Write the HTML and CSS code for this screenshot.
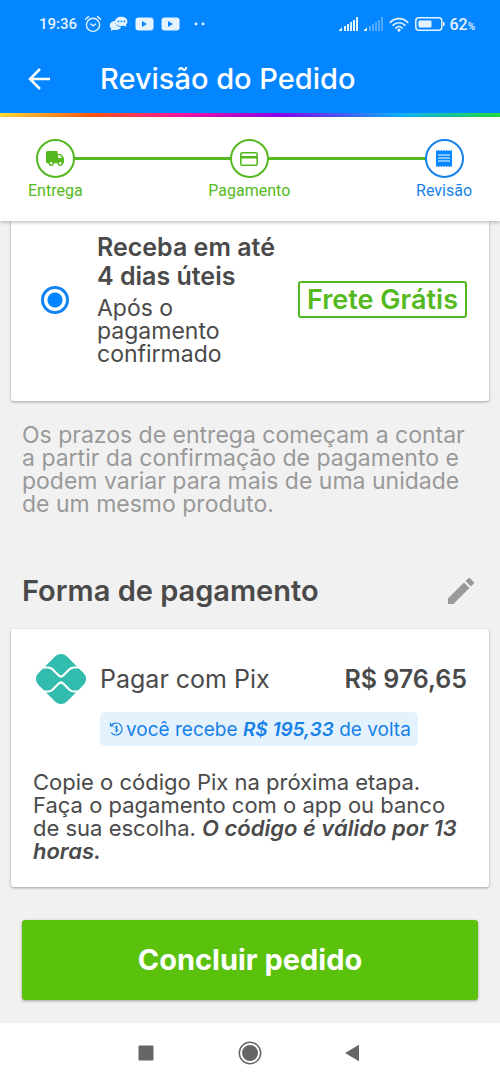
FILE: index.html
```
<!DOCTYPE html>
<html lang="pt-BR">
<head>
<meta charset="utf-8">
<meta name="viewport" content="width=device-width, initial-scale=1">
<title>Revisão do Pedido</title>
<link rel="stylesheet" href="styles.css">
</head>
<body>
<div class="screen">
  <div class="status-bar">
    <div class="status-group">
      <span class="clock">19:36</span>
      <svg class="status-icon" width="18" height="18" viewBox="0 0 18 18" fill="none" stroke="currentColor" stroke-width="1.4" stroke-linecap="round"><circle cx="9" cy="9.800" r="6.600"/><path d="M1.500 4.200 4.500 1.600M16.500 4.200l-3-2.600M6.800 9l2.400 1.900L11.600 9"/></svg>
      <svg class="status-icon" width="19" height="16" viewBox="0 0 19 16"><path fill="currentColor" d="M6.500 5C3 5 .8 7 .8 9.500c0 1.300.6 2.400 1.500 3.200L1.600 15l2.800-1.200c3.200.8 6.800-.2 7.800-2.800C8.500 10.800 5.900 8.500 6.500 5z"/><path fill="currentColor" d="M12.300.8c3.500 0 6.200 2.100 6.200 4.700 0 1.300-.6 2.400-1.600 3.200l.5 2.100-2.600-1.100c-4.400 1.100-8.700-.8-8.700-4.200C6.100 2.900 8.800.8 12.300.8z"/><g fill="#0386ff"><circle cx="9.500" cy="5.300" r=".9"/><circle cx="12.400" cy="5.300" r=".9"/><circle cx="15.300" cy="5.300" r=".9"/></g></svg>
      <svg class="status-icon" width="19" height="14" viewBox="0 0 19 14"><rect x=".5" y=".5" width="18" height="13" rx="3" fill="currentColor"/><path d="M7 4v6l5-3z" fill="#0386ff"/></svg>
      <svg class="status-icon" width="19" height="14" viewBox="0 0 19 14"><rect x=".5" y=".5" width="18" height="13" rx="3" fill="currentColor"/><path d="M7 4v6l5-3z" fill="#0386ff"/></svg>
      <svg class="status-more" width="12" height="4" viewBox="0 0 12 4" fill="currentColor"><circle cx="2" cy="2" r="1.400"/><circle cx="9" cy="2" r="1.400"/></svg>
    </div>
    <div class="status-group status-right">
      <svg class="status-icon" width="19" height="14" viewBox="0 0 19 14" fill="currentColor"><path d="M0 14v-1l3-2.500V14zM5 9h2v5H5zM8 7h2v7H8zM11 5h2v9h-2zM14 3h2v11h-2zM17 0h2v14h-2z"/></svg>
      <svg class="status-icon" width="19" height="14" viewBox="0 0 19 14" fill="currentColor"><path d="M0 14v-1l3-2.500V14z"/><path opacity=".35" d="M5 9h2v5H5zM8 7h2v7H8zM11 5h2v9h-2zM14 3h2v11h-2zM17 0h2v14h-2z"/></svg>
      <svg class="status-icon" width="20" height="15" viewBox="0 0 20 15" fill="none" stroke="currentColor" stroke-width="1.700" stroke-linecap="round"><path d="M1.300 5.300a12.300 12.300 0 0 1 17.400 0M4.100 8.200a8.300 8.300 0 0 1 11.800 0M6.900 11a4.400 4.400 0 0 1 6.200 0"/><path fill="currentColor" stroke="none" d="M10 11.500a1.600 1.600 0 0 1 1.400 2.300L10 15l-1.400-1.200A1.600 1.600 0 0 1 10 11.500z"/></svg>
      <svg class="status-icon" width="30" height="14" viewBox="0 0 30 14"><rect x=".8" y=".8" width="26" height="12.400" rx="3" fill="none" stroke="currentColor" stroke-width="1.500"/><rect x="3.500" y="3.500" width="13" height="7" rx="1" fill="currentColor"/><path fill="currentColor" d="M28 5h1.500v4H28z"/></svg>
      <span class="battery">62<small>%</small></span>
    </div>
  </div>

  <header class="app-bar">
    <button class="icon-button" type="button" aria-label="Voltar">
      <svg width="24" height="24" viewBox="0 0 24 24" fill="none" stroke="currentColor" stroke-width="2.500"><path d="M23 12H3M13 2 3 12l10 10"/></svg>
    </button>
    <h1 class="app-title">Revisão do Pedido</h1>
  </header>
  <div class="rainbow"></div>

  <ol class="steps">
    <li class="step">
      <span class="step-circle"><svg width="20" height="16" viewBox="0 0 20 16"><path fill="currentColor" d="M2.500 0h8.800c.8 0 1.400.6 1.400 1.400V3h2.600c.5 0 .9.200 1.200.6l2.200 3c.2.300.3.600.3 1v4.600h-1.300a2.500 2.500 0 0 1-5 0H8.700a2.500 2.500 0 0 1-5 0H2.500C1.700 12.200 1 11.600 1 10.800V1.400C1 .6 1.700 0 2.500 0z"/><path fill="#fff" d="M13.200 4.300h1.900l1.900 2.800h-3.800z"/><circle cx="6.200" cy="12.300" r="2.500" fill="currentColor"/><circle cx="15.200" cy="12.300" r="2.500" fill="currentColor"/><circle cx="6.200" cy="12.300" r="1.200" fill="#fff"/><circle cx="15.200" cy="12.300" r="1.200" fill="#fff"/></svg></span>
      Entrega
    </li>
    <li class="step">
      <span class="step-circle"><svg width="18" height="14" viewBox="0 0 18 14"><rect x=".8" y=".8" width="16.400" height="12.400" rx="1.500" fill="none" stroke="currentColor" stroke-width="1.600"/><path fill="currentColor" d="M1 4h16v2.500H1z"/></svg></span>
      Pagamento
    </li>
    <li class="step step-current" aria-current="step">
      <span class="step-circle"><svg width="16" height="17" viewBox="0 0 16 17"><path fill="#0386ff" d="M0 0l1.300 1L2.700 0 4 1l1.300-1 1.400 1L8 0l1.300 1 1.400-1L12 1l1.300-1 1.400 1L16 0v17l-1.300-1-1.400 1-1.300-1-1.300 1-1.400-1L8 17l-1.300-1-1.400 1L4 16l-1.300 1-1.400-1L0 17z"/><path stroke="#fff" stroke-width="1.200" d="M2 5h12M2 8h12M2 11h12"/></svg></span>
      Revisão
    </li>
  </ol>

  <main class="content">
    <section class="card shipping">
      <input class="radio" type="radio" name="shipping" id="shipping-free" checked>
      <label class="shipping-text" for="shipping-free">
        <strong class="shipping-title">Receba em até<br>4 dias úteis</strong>
        <span class="body-text">Após o<br>pagamento<br>confirmado</span>
      </label>
      <span class="free-tag">Frete Grátis</span>
    </section>

    <p class="note">Os prazos de entrega começam a contar<br>a partir da confirmação de pagamento e<br>podem variar para mais de uma unidade<br>de um mesmo produto.</p>

    <div class="section-head">
      <h2 class="section-title">Forma de pagamento</h2>
      <button class="icon-button edit" type="button" aria-label="Editar forma de pagamento">
        <svg width="26" height="26" viewBox="3 3 18 18" fill="currentColor"><path d="M3 17.250V21h3.750L17.810 9.940l-3.750-3.750zM20.710 7.040a1 1 0 0 0 0-1.410l-2.340-2.340a1 1 0 0 0-1.410 0l-1.830 1.830 3.750 3.750z"/></svg>
      </button>
    </div>

    <section class="card payment">
      <div class="payment-row">
        <svg class="pix" width="52" height="52" viewBox="0 0 52 52"><path fill="#32bcad" d="M20.300 3.300a8 8 0 0 1 11.400 0l17 17a8 8 0 0 1 0 11.400l-17 17a8 8 0 0 1-11.400 0l-17-17a8 8 0 0 1 0-11.400z"/><path fill="none" stroke="#fff" stroke-width="2.200" d="M8 14.500h5c2 0 3 .4 4.500 1.800l6 6c1.800 1.700 3.200 1.700 5 0l6-6c1.500-1.400 2.500-1.800 4.500-1.800h5M8 38.500h5c2 0 3-.4 4.500-1.800l6-6c1.800-1.700 3.200-1.700 5 0l6 6c1.500 1.400 2.500 1.800 4.500 1.800h5"/></svg>
        <span class="payment-name">Pagar com Pix</span>
        <strong class="price">R$ 976,65</strong>
      </div>
      <p class="cashback">
        <svg width="14" height="14" viewBox="0 0 14 14" fill="none" stroke="currentColor" stroke-width="1.200"><path d="M2.200 3.500a6 6 0 1 1 0 7M1.500.8v3h3"/><path stroke-width="1" d="M9 5.200C8.500 4.200 6 4.300 6 5.600c0 1.400 3 .9 3 2.500 0 1.500-2.600 1.500-3.100.3M7.500 3.500v7"/></svg>
        <span>você recebe <em>R$ 195,33</em> de volta</span>
      </p>
      <p class="instructions">Copie o código Pix na próxima etapa.<br>Faça o pagamento com o app ou banco<br>de sua escolha. <em>O código é válido por 13<br>horas.</em></p>
    </section>

    <button class="submit" type="button">Concluir pedido</button>
  </main>

  <nav class="system-nav">
    <button class="icon-button" type="button" aria-label="Recentes"><svg width="24" height="24" viewBox="0 0 24 24"><rect x="4.500" y="4.500" width="15" height="15" rx="1" fill="currentColor"/></svg></button>
    <button class="icon-button" type="button" aria-label="Início"><svg width="24" height="24" viewBox="0 0 24 24"><circle cx="12" cy="12" r="10.700" fill="none" stroke="currentColor" stroke-width="1.500"/><circle cx="12" cy="12" r="8" fill="currentColor"/></svg></button>
    <button class="icon-button" type="button" aria-label="Voltar do sistema"><svg width="24" height="24" viewBox="0 0 24 24"><path fill="currentColor" d="M3 12 17 3.800v16.400z"/></svg></button>
  </nav>
</div>
</body>
</html>
```
FILE: styles.css
```
* {
  box-sizing: border-box;
}

body {
  margin: 0;
  background: #f1f1f1;
  color: #4a4a4a;
  font-family: Inter, "Noto Sans", sans-serif;
}

h1, h2, p, ol {
  margin: 0;
  padding: 0;
}

svg {
  display: block;
}

.screen {
  display: flex;
  flex-direction: column;
  min-height: 100vh;
}

.icon-button {
  display: block;
  padding: 0;
  border: 0;
  background: none;
  color: inherit;
}

.status-bar {
  display: flex;
  justify-content: space-between;
  align-items: center;
  height: 48px;
  padding: 0 25px 0 39px;
  background: #0386ff;
  color: #e6f3ff;
  font-family: Roboto, sans-serif;
  font-size: 15px;
  font-weight: 500;
}

.status-group {
  display: flex;
  align-items: center;
  gap: 7px;
}

.status-right {
  gap: 6px;
}

.status-more {
  margin-left: 7px;
}

.battery {
  margin-left: -2px;
  font-size: 16px;
}

.battery small {
  font-size: 10px;
}

.app-bar {
  display: flex;
  align-items: center;
  gap: 49px;
  height: 65px;
  padding: 0 27px 4px;
  background: #0386ff;
  color: #fff;
}

.app-title {
  font-size: 29px;
  font-weight: 500;
  line-height: 32px;
}

.rainbow {
  height: 4px;
  background: linear-gradient(90deg, #ffe13a 0%, #ff5a10 18%, #ff17a0 36%, #8a00f0 56%, #0bb4ff 80%, #20e040 100%);
}

.steps {
  position: relative;
  z-index: 1;
  display: flex;
  justify-content: space-between;
  height: 104px;
  padding: 22px 28px 0;
  background: #fff;
  box-shadow: 0 1px 4px rgba(0, 0, 0, 0.3);
  color: #54b920;
  font-family: Roboto, sans-serif;
  font-size: 16px;
  line-height: 20px;
  list-style: none;
}

.steps::before {
  content: "";
  position: absolute;
  top: 40px;
  right: 56px;
  left: 56px;
  height: 3px;
  background: #54b920;
}

.step {
  position: relative;
  display: flex;
  flex-direction: column;
  align-items: center;
  gap: 3px;
}

.step-current {
  color: #1681e8;
}

.step-circle {
  display: grid;
  place-items: center;
  width: 39px;
  height: 39px;
  border: 2px solid currentColor;
  border-radius: 50%;
  background: #fff;
}

.content {
  flex: 1;
  padding: 0 11px 22px;
}

.card {
  border-radius: 3px;
  background: #fff;
  box-shadow: 0 1px 3px rgba(0, 0, 0, 0.35);
}

.shipping {
  display: flex;
  align-items: center;
  padding: 12px 22px 35px 30px;
  border-radius: 0 0 3px 3px;
}

.radio {
  appearance: none;
  flex: none;
  width: 28px;
  height: 28px;
  margin: 0 28px 0 0;
  border: 3px solid #1284f0;
  border-radius: 50%;
  background: radial-gradient(circle, #0386ff 7px, #fff 8px);
}

.shipping-text {
  flex: 1;
}

.shipping-title {
  display: block;
  margin-bottom: 6px;
  font-size: 25px;
  font-weight: 600;
  line-height: 29px;
}

.body-text {
  display: block;
  font-size: 23px;
  line-height: 23px;
}

.free-tag {
  padding: 0 7px;
  border: 2px solid #54b920;
  border-radius: 3px;
  color: #54b920;
  font-size: 27px;
  font-weight: 600;
  line-height: 33px;
  white-space: nowrap;
}

.note {
  padding: 23px 11px 0;
  color: #999;
  font-size: 23px;
  line-height: 23px;
}

.section-head {
  display: flex;
  justify-content: space-between;
  align-items: center;
  padding: 59px 15px 22px 11px;
}

.section-title {
  font-size: 29px;
  font-weight: 600;
  line-height: 32px;
}

.edit {
  color: #999;
}

.payment {
  padding: 24px 22px;
}

.payment-row {
  display: flex;
  align-items: center;
  gap: 13px;
  padding-left: 2px;
}

.payment-name {
  flex: 1;
  font-size: 25px;
}

.price {
  font-size: 25px;
  font-weight: 600;
}

.cashback {
  display: flex;
  align-items: center;
  gap: 3px;
  width: fit-content;
  height: 34px;
  margin: 7px 0 25px 67px;
  padding: 0 7px 0 9px;
  border-radius: 5px;
  background: #e4f2fe;
  color: #1681e8;
  font-size: 19px;
  white-space: nowrap;
}

em {
  font-weight: 600;
}

.instructions {
  font-size: 22px;
  line-height: 23px;
}

.submit {
  display: block;
  width: calc(100% - 22px);
  margin: 33px 11px 0;
  padding: 24px;
  border: 0;
  border-radius: 3px;
  background: #5ac10d;
  box-shadow: 0 1px 3px rgba(0, 0, 0, 0.35);
  color: #fff;
  font: 700 29px/32px Inter, "Noto Sans", sans-serif;
}

.system-nav {
  display: flex;
  justify-content: center;
  align-items: center;
  gap: 80px;
  height: 60px;
  background: #fff;
  color: #666;
}
```
